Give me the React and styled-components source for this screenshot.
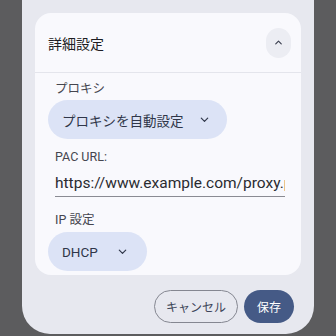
import React from "react";
import styled, { createGlobalStyle } from "styled-components";

const Global = createGlobalStyle`
  html, body {
    margin: 0;
    padding: 0;
    background: #5c5c5e;
  }
  body {
    font-family: Roboto, "Noto Sans CJK JP", "Noto Sans", sans-serif;
  }
`;

const Screen = styled.div`
  width: 336px;
  height: 336px;
  overflow: hidden;
  display: flex;
  justify-content: center;
  align-items: flex-end;
  padding-bottom: 2px;
  box-sizing: border-box;
`;

const Dialog = styled.div`
  width: 292px;
  box-sizing: border-box;
  padding: 13px 20px 11px 13px;
  background: #e7e8ef;
  border-radius: 0 0 28px 28px;
  display: flex;
  flex-direction: column;
  gap: 15px;
`;

const Card = styled.div`
  width: 266px;
  height: 262px;
  background: #f9f9fd;
  border-radius: 16px;
  overflow: hidden;
  display: flex;
  flex-direction: column;
`;

const CardHeader = styled.div`
  height: 59px;
  display: flex;
  align-items: center;
  justify-content: space-between;
  padding: 0 10px 0 13px;
  border-bottom: 1px solid #e4e5ec;
  flex-shrink: 0;
`;

const Title = styled.span`
  font-size: 14px;
  color: #1d1d23;
  font-family: "Noto Sans CJK JP", sans-serif;
`;

const CollapseButton = styled.button`
  width: 25px;
  height: 30px;
  border: none;
  border-radius: 13px;
  background: #ecedf3;
  display: flex;
  align-items: center;
  justify-content: center;
  padding: 0;
  color: #3c4050;
`;

const Body = styled.div`
  padding: 7px 16px 0 13px;
  display: flex;
  flex-direction: column;
`;

const Label = styled.div`
  font-size: 12.5px;
  color: #45464f;
  padding-left: 7px;
  line-height: 18px;
  margin-top: ${(p) => p.$top || 0}px;
  font-family: Roboto, "Noto Sans CJK JP", sans-serif;
`;

const Select = styled.div`
  width: ${(p) => p.$w}px;
  height: 39px;
  box-sizing: border-box;
  border-radius: 20px;
  background: #dce3f6;
  display: flex;
  align-items: center;
  justify-content: space-between;
  padding: 0 ${(p) => p.$pr}px 0 14px;
  margin-top: ${(p) => p.$top}px;
  color: #2f3649;
  font-size: 13.5px;
  font-family: Roboto, "Noto Sans CJK JP", sans-serif;
`;

const UrlInput = styled.div`
  margin: 4px 0 0 7px;
  width: 230px;
  height: 27px;
  box-sizing: border-box;
  border-bottom: 1px solid #8a8b93;
  overflow: hidden;
  white-space: nowrap;
  text-overflow: clip;
  font-size: 15.5px;
  line-height: 26px;
  color: #2a2b31;
  font-family: Roboto, sans-serif;
`;

const Actions = styled.div`
  display: flex;
  justify-content: flex-end;
  gap: 6px;
`;

const Button = styled.button`
  height: 33px;
  box-sizing: border-box;
  border-radius: 17px;
  font-size: 12px;
  font-family: "Noto Sans CJK JP", sans-serif;
  padding: 0 ${(p) => (p.$primary ? 13 : 11)}px;
  border: ${(p) => (p.$primary ? "none" : "1px solid #858791")};
  background: ${(p) => (p.$primary ? "#455a86" : "transparent")};
  color: ${(p) => (p.$primary ? "#ffffff" : "#3d4559")};
`;

const Chevron = ({ up }) => (
  <svg width="11" height="11" viewBox="0 0 24 24" fill="none">
    <path
      d={up ? "M6 15l6-6 6 6" : "M5 9l7 7 7-7"}
      stroke="currentColor"
      strokeWidth="2.6"
      strokeLinecap="round"
      strokeLinejoin="round"
    />
  </svg>
);

export default function App() {
  return (
    <>
      <Global />
      <Screen>
        <Dialog>
          <Card>
            <CardHeader>
              <Title>詳細設定</Title>
              <CollapseButton>
                <Chevron up />
              </CollapseButton>
            </CardHeader>
            <Body>
              <Label>プロキシ</Label>
              <Select $w={179} $pr={17} $top={2}>
                <span>プロキシを自動設定</span>
                <Chevron />
              </Select>
              <Label $top={9}>PAC URL:</Label>
              <UrlInput>https://www.example.com/proxy.pac</UrlInput>
              <Label $top={14}>IP 設定</Label>
              <Select $w={99} $pr={19} $top={3}>
                <span>DHCP</span>
                <Chevron />
              </Select>
            </Body>
          </Card>
          <Actions>
            <Button>キャンセル</Button>
            <Button $primary>保存</Button>
          </Actions>
        </Dialog>
      </Screen>
    </>
  );
}
